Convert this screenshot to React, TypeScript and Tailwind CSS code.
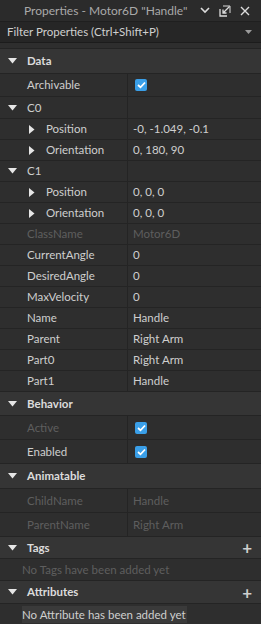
import React from 'react';

type Prop = {
  label: string;
  value?: string;
  check?: boolean;
  nested?: boolean;
  group?: boolean;
  dim?: boolean;
  h: string;
};

const Arrow: React.FC<{ dir: 'down' | 'right' }> = ({ dir }) =>
  dir === 'down' ? (
    <svg width="9" height="6" viewBox="0 0 9 6" className="shrink-0">
      <path d="M0 0 H9 L4.5 5.5 Z" fill="#e6e6e6" />
    </svg>
  ) : (
    <svg width="6" height="9" viewBox="0 0 6 9" className="shrink-0">
      <path d="M0 0 V9 L5.5 4.5 Z" fill="#e6e6e6" />
    </svg>
  );

const Check = () => (
  <span className="w-[12px] h-[12px] rounded-[2px] bg-[#3a9fe8] flex items-center justify-center">
    <svg width="9" height="8" viewBox="0 0 9 8">
      <path d="M1 4 L3.5 6.3 L8 1.5" stroke="#fff" strokeWidth="1.8" fill="none" />
    </svg>
  </span>
);

const Header: React.FC<{ title: string; h: string; plus?: boolean }> = ({ title, h, plus }) => (
  <div className={`${h} flex items-center bg-[#353535] border-b border-[#242424] pl-[8px] pr-[9px]`}>
    <Arrow dir="down" />
    <span className="ml-[10px] font-bold text-[#dcdcdc]">{title}</span>
    {plus && <span className="ml-auto text-[#cfcfcf] text-[17px] font-bold leading-none">+</span>}
  </div>
);

const Row: React.FC<{ p: Prop }> = ({ p }) => {
  const txt = p.dim ? 'text-[#5e5e5e]' : 'text-[#cfcfcf]';
  return (
    <div className={`${p.h} flex border-b border-[#242424]`}>
      <div className="w-[128px] shrink-0 flex items-center border-r border-[#242424]">
        {p.group ? (
          <span className="pl-[8px] flex items-center">
            <Arrow dir="down" />
            <span className={`ml-[10px] ${txt}`}>{p.label}</span>
          </span>
        ) : p.nested ? (
          <span className="pl-[29px] flex items-center">
            <Arrow dir="right" />
            <span className={`ml-[11px] ${txt}`}>{p.label}</span>
          </span>
        ) : (
          <span className={`pl-[27px] ${txt}`}>{p.label}</span>
        )}
      </div>
      <div className="flex-1 flex items-center pl-[5px]">
        {p.check ? <span className="pl-[2px]"><Check /></span> : <span className={txt}>{p.value}</span>}
      </div>
    </div>
  );
};

const dataRows: Prop[] = [
  { label: 'Archivable', check: true, h: 'h-[23px]' },
  { label: 'C0', group: true, h: 'h-[22px]' },
  { label: 'Position', value: '-0, -1.049, -0.1', nested: true, h: 'h-[21px]' },
  { label: 'Orientation', value: '0, 180, 90', nested: true, h: 'h-[21px]' },
  { label: 'C1', group: true, h: 'h-[21px]' },
  { label: 'Position', value: '0, 0, 0', nested: true, h: 'h-[21px]' },
  { label: 'Orientation', value: '0, 0, 0', nested: true, h: 'h-[21px]' },
  { label: 'ClassName', value: 'Motor6D', dim: true, h: 'h-[21px]' },
  { label: 'CurrentAngle', value: '0', h: 'h-[21px]' },
  { label: 'DesiredAngle', value: '0', h: 'h-[21px]' },
  { label: 'MaxVelocity', value: '0', h: 'h-[21px]' },
  { label: 'Name', value: 'Handle', h: 'h-[21px]' },
  { label: 'Parent', value: 'Right Arm', h: 'h-[21px]' },
  { label: 'Part0', value: 'Right Arm', h: 'h-[21px]' },
  { label: 'Part1', value: 'Handle', h: 'h-[21px]' },
];

const behaviorRows: Prop[] = [
  { label: 'Active', check: true, dim: true, h: 'h-[24px]' },
  { label: 'Enabled', check: true, h: 'h-[24px]' },
];

const animRows: Prop[] = [
  { label: 'ChildName', value: 'Handle', dim: true, h: 'h-[24px]' },
  { label: 'ParentName', value: 'Right Arm', dim: true, h: 'h-[24px]' },
];

export default function App() {
  return (
    <div
      className="w-[261px] h-[624px] overflow-hidden bg-[#2e2e2e] text-[11.5px] leading-none flex flex-col whitespace-nowrap"
      style={{ fontFamily: 'Lato, "Open Sans", sans-serif' }}
    >
      {/* title bar */}
      <div className="h-[22px] shrink-0 flex items-center bg-[#2b2b2b] border-b border-[#1f1f1f] pl-[24px] pr-[11px] text-[#a9a9a9] text-[12px]">
        <span>Properties - Motor6D "Handle"</span>
        <div className="ml-auto flex items-center gap-[9px]">
          <svg width="10" height="7" viewBox="0 0 10 7">
            <path d="M1 1 L5 5 L9 1" stroke="#dcdcdc" strokeWidth="1.6" fill="none" />
          </svg>
          <svg width="12" height="12" viewBox="0 0 12 12">
            <path d="M1 4 V11 H8" stroke="#dcdcdc" strokeWidth="1.3" fill="none" />
            <path d="M4 1 H11 V8" stroke="#dcdcdc" strokeWidth="1" fill="none" />
            <path d="M10.5 1.5 L4 8 M4 4.5 V8 H7.5" stroke="#dcdcdc" strokeWidth="1.3" fill="none" />
          </svg>
          <svg width="10" height="10" viewBox="0 0 10 10">
            <path d="M1 1 L9 9 M9 1 L1 9" stroke="#dcdcdc" strokeWidth="1.4" />
          </svg>
        </div>
      </div>

      {/* filter */}
      <div className="h-[21px] shrink-0 flex items-center bg-[#262626] border-b border-[#1c1c1c] pl-[7px] pr-[9px] text-[#cfcfcf]">
        <span>Filter Properties (Ctrl+Shift+P)</span>
        <svg width="7" height="4" viewBox="0 0 7 4" className="ml-auto">
          <path d="M0 0 H7 L3.5 4 Z" fill="#9a9a9a" />
        </svg>
      </div>

      <div className="h-[5px] shrink-0" />

      <div className="border-t border-[#242424] flex flex-col">
        <Header title="Data" h="h-[25px]" />
        {dataRows.map((p, i) => <Row key={'d' + i} p={p} />)}
        <Header title="Behavior" h="h-[24px]" />
        {behaviorRows.map((p, i) => <Row key={'b' + i} p={p} />)}
        <Header title="Animatable" h="h-[25px]" />
        {animRows.map((p, i) => <Row key={'a' + i} p={p} />)}
        <Header title="Tags" h="h-[22px]" plus />
        <div className="h-[22px] flex items-center pl-[22px] border-b border-[#242424] text-[#5e5e5e]">
          No Tags have been added yet
        </div>
        <Header title="Attributes" h="h-[23px]" plus />
        <div className="h-[21px] flex items-center pl-[22px]">
          <span className="bg-[#3a3a3a] text-[#cfcfcf] h-[17px] flex items-center pr-[1px]">No Attribute has been added yet</span>
        </div>
      </div>
    </div>
  );
}
